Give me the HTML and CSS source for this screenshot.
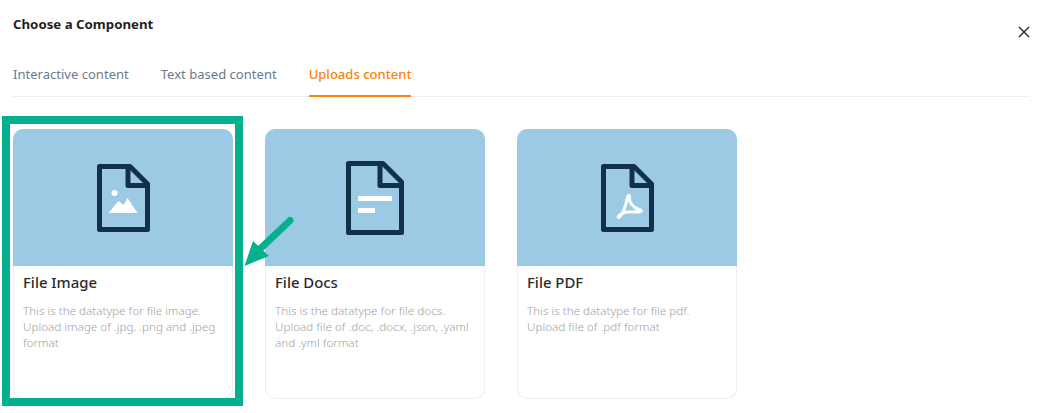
FILE: index.html
```html
<!DOCTYPE html>
<html lang="en">
<head>
    <meta charset="UTF-8">
    <meta name="viewport" content="width=device-width, initial-scale=1.0">
    <title>Choose a Component</title>
    <link rel="stylesheet" href="styles.css">
</head>
<body>
    <div class="modal">
        <div class="modal-head">
            <h1>Choose a Component</h1>
            <svg class="close" width="12" height="12" viewBox="0 0 12 12"><path d="M1 1l10 10M11 1L1 11" stroke="#222" stroke-width="1.3" fill="none"/></svg>
        </div>

        <div class="tabs">
            <span class="tab">Interactive content</span>
            <span class="tab">Text based content</span>
            <span class="tab active">Uploads content</span>
        </div>

        <div class="cards">
            <div class="card">
                <div class="thumb">
                    <svg class="file-icon" width="53" height="68" viewBox="0 0 53 68">
                        <path class="file-line" d="M2.500 2.500H33L50.500 20V65.500H2.500Z"/>
                        <path class="file-line" d="M31 2.500V21.500H50.500"/>
                        <circle cx="17.500" cy="29" r="3" fill="#fff"/>
                        <path d="M11.500 49l10-12 5 4 4-7 10 15Z" fill="#fff"/>
                    </svg>
                </div>
                <div class="card-body">
                    <h2>File Image</h2>
                    <p>This is the datatype for file image. Upload image of .jpg, .png and .jpeg format</p>
                </div>
            </div>
            <div class="card">
                <div class="thumb">
                    <svg class="file-icon" width="58" height="74" viewBox="0 0 58 74">
                        <path class="file-line" d="M2.500 2.500H37L55.500 21V71.500H2.500Z"/>
                        <path class="file-line" d="M34 2.500V24.500H55.500"/>
                        <path d="M12 35h34v5H12ZM12 47h17v5H12Z" fill="#fff"/>
                    </svg>
                </div>
                <div class="card-body">
                    <h2>File Docs</h2>
                    <p>This is the datatype for file docs. Upload file of .doc, .docx, .json, .yaml and .yml format</p>
                </div>
            </div>
            <div class="card">
                <div class="thumb">
                    <svg class="file-icon" width="53" height="68" viewBox="0 0 53 68">
                        <path class="file-line" d="M2.500 2.500H33L50.500 20V65.500H2.500Z"/>
                        <path class="file-line" d="M31 2.500V21.500H50.500"/>
                        <path d="M17.500 53.500C21 52 25 42 26.500 33.500C27 30.500 29 31 28.500 34C28 38 32 44 38 45.500C41 46 41 48 37.500 48C31 47.500 24 47.500 20 50C18 51.500 16.500 53 17.500 53.500Z" fill="none" stroke="#fff" stroke-width="3" stroke-linejoin="round"/>
                    </svg>
                </div>
                <div class="card-body">
                    <h2>File PDF</h2>
                    <p>This is the datatype for file pdf. Upload file of .pdf format</p>
                </div>
            </div>
        </div>

        <!-- highlight drawn over the first card -->
        <div class="highlight"></div>
        <svg class="arrow" width="52" height="52" viewBox="0 0 52 52">
            <path d="M46 5.500L17 33" stroke="#05b08e" stroke-width="7" stroke-linecap="round" fill="none"/>
            <path d="M0.500 51L9 26 25 41Z" fill="#05b08e"/>
        </svg>
    </div>
</body>
</html>
```

FILE: styles.css
```css
body {
    margin: 0;
    font-family: "Noto Sans", "Open Sans", Arial, sans-serif;
    background-color: #fff;
    color: #222;
}
.modal {
    position: relative;
    height: 413px;
    box-sizing: border-box;
    padding: 14px 13px 0;
    overflow: hidden;
}
.modal-head {
    display: flex;
    justify-content: space-between;
    align-items: flex-start;
    height: 37px;
}
.modal-head h1 {
    margin: 0;
    font-size: 13.250px;
    line-height: 20px;
    font-weight: 700;
    color: #1f1f1f;
}
.close {
    margin-top: 12px;
}
.tabs {
    display: flex;
    gap: 32px;
    border-bottom: 1px solid #eceeef;
    height: 45px;
}
.tab {
    font-size: 13.050px;
    line-height: 20px;
    padding-top: 13px;
    height: 31px;
    color: #6c7a89;
}
.tab.active {
    color: #f98307;
    font-weight: 500;
    border-bottom: 2px solid #f98307;
}
.cards {
    display: flex;
    gap: 32px;
    margin-top: 32px;
}
.card {
    width: 220px;
    height: 270px;
    display: flex;
    flex-direction: column;
}
.thumb {
    height: 137px;
    flex: none;
    border-radius: 10px 10px 0 0;
    background-color: #9cc9e3;
    display: flex;
    align-items: center;
    justify-content: center;
}
.card-body {
    flex: 1;
    border: 1px solid #eeeeee;
    border-top: none;
    border-radius: 0 0 10px 10px;
    padding: 6px 9px 0;
}
.file-line {
    fill: none;
    stroke: #12304a;
    stroke-width: 5;
    stroke-linejoin: round;
}
.card h2 {
    margin: 0;
    font-size: 14.900px;
    line-height: 20px;
    font-weight: 500;
    color: #2b2b2b;
}
.card p {
    margin: 10px 0 0;
    font-size: 11.700px;
    line-height: 16px;
    font-weight: 300;
    color: #9f9f9f;
}
.highlight {
    position: absolute;
    left: 2px;
    top: 116px;
    width: 241px;
    height: 290px;
    box-sizing: border-box;
    border: 8px solid #05b08e;
}
.arrow {
    position: absolute;
    left: 244px;
    top: 215px;
}
```
